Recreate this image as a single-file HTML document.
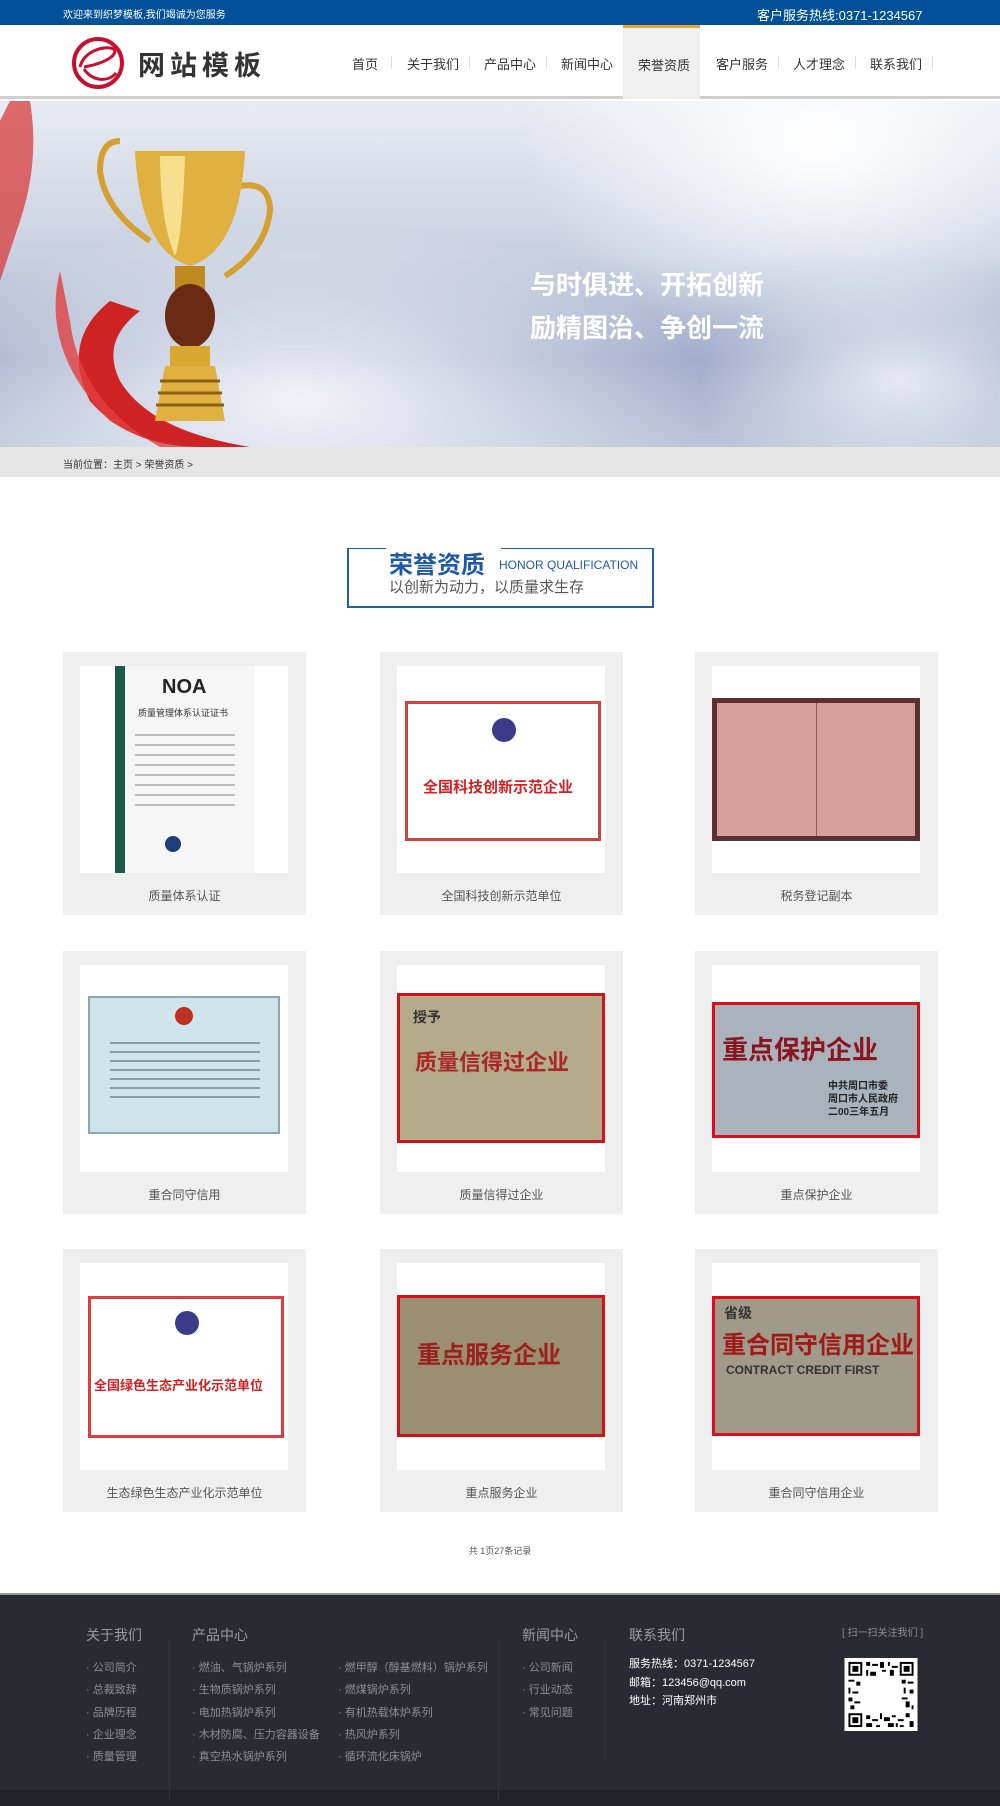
<!DOCTYPE html>
<html><head><meta charset="utf-8"><style>
*{margin:0;padding:0;box-sizing:border-box}
body{width:1000px;height:1804px;position:relative;background:#fff;font-family:"Liberation Sans","Noto Sans CJK SC",sans-serif;overflow:hidden}
.a{position:absolute}
.top{left:0;top:0;width:1000px;height:25px;background:#00519a;color:#fff}
.nav{top:25px;height:74px;left:0;width:1000px;background:#fff;border-bottom:3px solid #cfcfcf}
.nav span{position:absolute;top:29px;font-size:13px;color:#333}
.nav i{position:absolute;top:31px;width:1px;height:13px;background:#ddd}
.card{width:243px;height:263px;background:#efefef}
.card .in{position:absolute;left:17px;top:14px;width:208px;height:207px;background:#fff;overflow:hidden}
.card .cap{position:absolute;left:0;width:243px;top:235px;text-align:center;font-size:12px;color:#555}
.ft{color:#8d8e94;font-size:11px}
.ft .h{font-size:14px;color:#9a9ba0}
.plq{position:absolute;left:0;width:208px;border:3px solid #d4101c}
</style></head><body>
<div class="a top">
<div class="a" style="left:63px;top:6px;font-size:10px">欢迎来到织梦模板,我们竭诚为您服务</div>
<div class="a" style="left:757px;top:5px;font-size:13px">客户服务热线:0371-1234567</div>
</div>
<div class="a nav">
<svg class="a" style="left:70px;top:10px" width="56" height="56" viewBox="0 0 56 56"><circle cx="28" cy="28" r="24" fill="none" stroke="#c8102e" stroke-width="4"/><path d="M10 32 C14 16 34 10 44 14 C48 20 36 28 14 32 M14 34 C22 46 38 48 46 38" fill="none" stroke="#c8102e" stroke-width="3"/></svg>
<div class="a" style="left:138px;top:19px;font-size:27px;font-weight:bold;color:#333;letter-spacing:5px">网站模板</div>
<span style="left:352px">首页</span><i style="left:391px"></i>
<span style="left:407px">关于我们</span><i style="left:469px"></i>
<span style="left:484px">产品中心</span><i style="left:546px"></i>
<span style="left:561px">新闻中心</span>
<div class="a" style="left:623px;top:0;width:77px;height:74px;background:#f0f0f0;border-top:3px solid #e8a32c"></div>
<span style="left:638px;top:30px">荣誉资质</span>
<span style="left:716px">客户服务</span><i style="left:778px"></i>
<span style="left:793px">人才理念</span><i style="left:855px"></i>
<span style="left:870px">联系我们</span><i style="left:932px"></i>
</div>
<div class="a" style="left:0;top:101px;width:1000px;height:346px;overflow:hidden;background:radial-gradient(ellipse 300px 200px at 820px 40px,#fff,rgba(255,255,255,0)),radial-gradient(ellipse 400px 180px at 300px 300px,#f2f3f8,rgba(240,240,245,0)),radial-gradient(ellipse 200px 120px at 900px 280px,#e6e9f2,rgba(230,233,242,0)),linear-gradient(180deg,#e8ebf2 0%,#c9d0e0 45%,#a2aecb 75%,#bcc5da 100%)">
<svg class="a" style="left:0;top:0" width="400" height="346" viewBox="0 0 400 346">
<path d="M0 20 L10 0 L30 0 Q40 60 20 120 L0 180 Z" fill="#d83030" opacity=".7"/>
<path d="M110 200 Q60 240 90 300 Q130 346 200 346 L250 346 Q150 330 120 280 Q100 240 140 210 Z" fill="#cf2222"/>
<path d="M60 170 Q40 250 110 320 Q150 346 200 346 L160 346 Q80 300 70 220 Z" fill="#e04040" opacity=".8"/>
<path d="M120 40 Q100 40 100 70 Q105 110 150 140" fill="none" stroke="#d4a030" stroke-width="6"/>
<path d="M240 85 Q270 80 270 110 Q265 150 225 175" fill="none" stroke="#d4a030" stroke-width="6"/>
<path d="M135 50 L245 50 Q240 150 190 165 Q140 150 135 50 Z" fill="#e0b040"/>
<path d="M160 55 L185 55 Q182 140 175 155 Q160 120 160 55Z" fill="#fff3b0" opacity=".7"/>
<rect x="175" y="165" width="30" height="25" fill="#c08a20"/>
<ellipse cx="190" cy="215" rx="25" ry="32" fill="#6a2a14"/>
<rect x="170" y="245" width="40" height="20" fill="#d8a830"/>
<path d="M165 265 L215 265 L225 320 L155 320 Z" fill="#e0b040"/>
<path d="M160 280 H220 M158 292 H222 M156 304 H224" stroke="#8a6010" stroke-width="3"/>
</svg>
<div class="a" style="left:530px;top:164px;font-size:26px;font-weight:bold;color:#fff">与时俱进、开拓创新</div>
<div class="a" style="left:530px;top:207px;font-size:26px;font-weight:bold;color:#fff">励精图治、争创一流</div>
</div>
<div class="a" style="left:0;top:447px;width:1000px;height:30px;background:#e6e6e6"></div>
<div class="a" style="left:63px;top:456px;font-size:10px;color:#333">当前位置：主页 &gt; 荣誉资质 &gt;</div>
<div class="a" style="left:347px;top:548px;width:307px;height:60px;border:2px solid #2160a8;border-top-width:1px"></div>
<div class="a" style="left:386px;top:546px;width:115px;height:4px;background:#fff"></div>
<div class="a" style="left:389px;top:545px;font-size:24px;font-weight:bold;color:#1e5aa3">荣誉资质</div>
<div class="a" style="left:499px;top:558px;font-size:12px;color:#1e5aa3">HONOR QUALIFICATION</div>
<div class="a" style="left:389px;top:576px;font-size:15px;color:#555">以创新为动力，以质量求生存</div>

<!-- row1 -->
<div class="a card" style="left:63px;top:652px"><div class="in">
<div class="a" style="left:35px;top:0;width:140px;height:207px;background:#f6f6f6;border-left:10px solid #1b5a48"></div>
<div class="a" style="left:82px;top:10px;font-size:20px;font-weight:bold;color:#222">NOA</div>
<div class="a" style="left:58px;top:40px;font-size:9px;color:#333">质量管理体系认证证书</div>
<div class="a" style="left:55px;top:60px;width:100px;height:80px;background:repeating-linear-gradient(180deg,transparent 0 8px,#bbb 8px 10px)"></div>
<div class="a" style="left:85px;top:170px;width:16px;height:16px;border-radius:50%;background:#1e3e7a"></div>
</div><div class="cap">质量体系认证</div></div>
<div class="a card" style="left:380px;top:652px"><div class="in">
<div class="a" style="left:8px;top:35px;width:196px;height:140px;border:3px solid #d84040;background:#fff"></div>
<div class="a" style="left:95px;top:52px;width:24px;height:24px;border-radius:50%;background:#3a3c8a"></div>
<div class="a" style="left:26px;top:110px;font-size:15px;font-weight:bold;color:#d42020">全国科技创新示范企业</div>
</div><div class="cap">全国科技创新示范单位</div></div>
<div class="a card" style="left:695px;top:652px"><div class="in">
<div class="a" style="left:0;top:32px;width:208px;height:143px;background:#d7a09a;border:5px solid #5a3030"></div>
<div class="a" style="left:104px;top:37px;width:1px;height:133px;background:#8a5a5a"></div>
</div><div class="cap">税务登记副本</div></div>
<!-- row2 -->
<div class="a card" style="left:63px;top:951px"><div class="in">
<div class="a" style="left:8px;top:31px;width:192px;height:138px;background:#cfe3ea;border:2px solid #8aa"></div>
<div class="a" style="left:95px;top:42px;width:18px;height:18px;border-radius:50%;background:#c03020"></div>
<div class="a" style="left:30px;top:70px;width:150px;height:70px;background:repeating-linear-gradient(180deg,transparent 0 7px,#8a9aa8 7px 9px)"></div>
</div><div class="cap">重合同守信用</div></div>
<div class="a card" style="left:380px;top:951px"><div class="in">
<div class="plq" style="top:28px;height:150px;background:#b5ab8c"></div>
<div class="a" style="left:16px;top:42px;font-size:14px;font-weight:bold;color:#333">授予</div>
<div class="a" style="left:18px;top:80px;font-size:22px;font-weight:bold;color:#a82828">质量信得过企业</div>
</div><div class="cap">质量信得过企业</div></div>
<div class="a card" style="left:695px;top:951px"><div class="in">
<div class="plq" style="top:37px;height:136px;background:#aab3bb"></div>
<div class="a" style="left:10px;top:65px;font-size:26px;font-weight:bold;color:#8a1520">重点保护企业</div>
<div class="a" style="left:116px;top:115px;font-size:10px;font-weight:bold;color:#222;line-height:13px">中共周口市委<br>周口市人民政府<br>二00三年五月</div>
</div><div class="cap">重点保护企业</div></div>
<!-- row3 -->
<div class="a card" style="left:63px;top:1249px"><div class="in">
<div class="a" style="left:8px;top:33px;width:196px;height:142px;border:3px solid #d84040;background:#fff"></div>
<div class="a" style="left:95px;top:48px;width:24px;height:24px;border-radius:50%;background:#3a3c8a"></div>
<div class="a" style="left:14px;top:112px;font-size:13px;font-weight:bold;color:#d42020;white-space:nowrap">全国绿色生态产业化示范单位</div>
</div><div class="cap">生态绿色生态产业化示范单位</div></div>
<div class="a card" style="left:380px;top:1249px"><div class="in">
<div class="plq" style="top:32px;height:142px;background:#9c8e72"></div>
<div class="a" style="left:20px;top:72px;font-size:24px;font-weight:bold;color:#9a2020">重点服务企业</div>
</div><div class="cap">重点服务企业</div></div>
<div class="a card" style="left:695px;top:1249px"><div class="in">
<div class="plq" style="top:33px;height:140px;background:#a09a88"></div>
<div class="a" style="left:12px;top:40px;font-size:14px;font-weight:bold;color:#333">省级</div>
<div class="a" style="left:10px;top:62px;font-size:24px;font-weight:bold;color:#a01818">重合同守信用企业</div>
<div class="a" style="left:14px;top:100px;font-size:12px;font-weight:bold;color:#333">CONTRACT CREDIT FIRST</div>
</div><div class="cap">重合同守信用企业</div></div>

<div class="a" style="left:0;width:1000px;top:1544px;text-align:center;font-size:9px;color:#555">共 1页27条记录</div>

<div class="a ft" style="left:0;top:1593px;width:1000px;height:211px;background:#2a2b32;border-top:2px solid #999">
<div class="a" style="left:0;top:195px;width:1000px;height:16px;background:#222329"></div>
<div class="a" style="left:169px;top:45px;width:1px;height:160px;background:#33343b"></div>
<div class="a" style="left:498px;top:45px;width:1px;height:160px;background:#33343b"></div>
<div class="a" style="left:605px;top:45px;width:1px;height:120px;background:#33343b"></div>
<div class="a h" style="left:86px;top:30px">关于我们</div>
<div class="a h" style="left:192px;top:30px">产品中心</div>
<div class="a h" style="left:522px;top:30px">新闻中心</div>
<div class="a h" style="left:629px;top:30px">联系我们</div>
<div class="a" style="left:86px;top:62px;line-height:22.3px">· 公司简介<br>· 总裁致辞<br>· 品牌历程<br>· 企业理念<br>· 质量管理</div>
<div class="a" style="left:192px;top:62px;line-height:22.3px">· 燃油、气锅炉系列<br>· 生物质锅炉系列<br>· 电加热锅炉系列<br>· 木材防腐、压力容器设备<br>· 真空热水锅炉系列</div>
<div class="a" style="left:338px;top:62px;line-height:22.3px">· 燃甲醇（醇基燃料）锅炉系列<br>· 燃煤锅炉系列<br>· 有机热载体炉系列<br>· 热风炉系列<br>· 循环流化床锅炉</div>
<div class="a" style="left:522px;top:62px;line-height:22.3px">· 公司新闻<br>· 行业动态<br>· 常见问题</div>
<div class="a" style="left:629px;top:60px;color:#fff;font-size:11px;line-height:18.5px">服务热线：0371-1234567<br>邮箱：123456@qq.com<br>地址：河南郑州市</div>
<div class="a" style="left:842px;top:29px;font-size:10px">[ 扫一扫关注我们 ]</div>
<svg class="a" style="left:844px;top:63px" width="74" height="73" viewBox="0 0 37 37">
<rect width="37" height="37" fill="#fff"/>
<g fill="#000">
<rect x="2" y="2" width="7" height="7"/><rect x="28" y="2" width="7" height="7"/><rect x="2" y="28" width="7" height="7"/>
<rect x="3" y="3" width="5" height="5" fill="#fff"/><rect x="29" y="3" width="5" height="5" fill="#fff"/><rect x="3" y="29" width="5" height="5" fill="#fff"/>
<rect x="4" y="4" width="3" height="3"/><rect x="30" y="4" width="3" height="3"/><rect x="4" y="30" width="3" height="3"/>
<path d="M11 2h2v2h-2zM14 3h3v1h-3zM18 2h2v3h-2zM22 2h1v2h-1zM24 4h3v1h-3zM11 6h1v3h-1zM13 7h3v2h-3zM19 6h2v1h-2zM23 6h2v3h-2zM2 11h3v1h-3zM6 12h2v2h-2zM2 15h1v3h-1zM4 17h3v1h-3zM2 20h2v2h-2zM5 22h3v1h-3zM3 24h2v2h-2zM29 11h2v2h-2zM32 12h3v1h-3zM30 15h1v3h-1zM33 16h2v2h-2zM29 20h3v1h-3zM31 22h2v3h-2zM34 24h1v2h-1zM11 29h2v2h-2zM14 31h3v1h-3zM18 28h1v3h-1zM20 30h3v2h-3zM24 29h2v1h-2zM27 31h3v1h-3zM31 28h2v2h-2zM33 32h2v3h-2zM11 33h3v2h-3zM16 34h2v1h-2zM22 33h3v2h-3zM28 34h2v1h-2zM26 33h1v2h-1z"/>
</g></svg>
</div>
</body></html>
